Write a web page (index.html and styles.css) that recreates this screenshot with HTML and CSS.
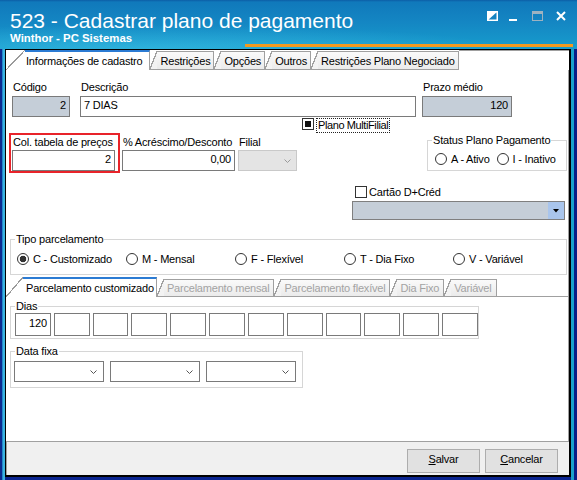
FILE: index.html
```html
<!DOCTYPE html>
<html lang="pt-BR">
<head>
<meta charset="utf-8">
<title>523 - Cadastrar plano de pagamento</title>
<link rel="stylesheet" href="styles.css">
</head>
<body>
<div class="window">
  <header class="titlebar">
    <div class="title-row">
      <h1 class="title">523 - Cadastrar plano de pagamento</h1>
      <div class="controls">
        <svg class="ctl ctl-dock" width="11" height="10" viewBox="0 0 11 10"><rect x="0.75" y="0.75" width="9.5" height="8.5" fill="none" stroke="#fff" stroke-width="1.5"/><polygon points="0,0 11,0 0,10" fill="#fff"/></svg>
        <svg class="ctl ctl-min" width="8" height="11" viewBox="0 0 8 11"><rect x="0" y="8" width="8" height="2" fill="#fff"/></svg>
        <svg class="ctl ctl-max" width="11" height="10" viewBox="0 0 11 10"><rect x="0.5" y="0.5" width="10" height="9" fill="none" stroke="#9db2c0"/><rect x="0" y="0" width="11" height="3" fill="#9db2c0"/></svg>
        <svg class="ctl ctl-close" width="10" height="10" viewBox="0 0 10 10"><path d="M1 1 L9 9 M9 1 L1 9" stroke="#fff" stroke-width="2"/></svg>
      </div>
    </div>
    <div class="subtitle">Winthor - PC Sistemas</div>
    <div class="accent"></div>
  </header>

  <div class="frame">
    <div class="panel">
      <nav class="tabs tabs-outer">
        <div class="tab active"><span>Informações de cadastro</span></div>
        <div class="tab"><span>Restrições</span></div>
        <div class="tab"><span>Opções</span></div>
        <div class="tab"><span>Outros</span></div>
        <div class="tab"><span>Restrições Plano Negociado</span></div>
      </nav>

      <section class="page">
        <div class="row row-main">
          <div class="field f-code">
            <span class="lbl">Código</span>
            <div class="input num ro">2</div>
          </div>
          <div class="field f-desc">
            <span class="lbl">Descrição</span>
            <div class="input">7 DIAS</div>
          </div>
          <div class="field f-prazo">
            <span class="lbl">Prazo médio</span>
            <div class="input num ro">120</div>
          </div>
        </div>

        <div class="row row-multi">
          <span class="check"><span class="mark"></span></span>
          <span class="focus-label">Plano MultiFilial</span>
        </div>

        <div class="row row-prices">
          <div class="redbox">
            <div class="field">
              <span class="lbl">Col. tabela de preços</span>
              <div class="input num f-col">2</div>
            </div>
          </div>
          <div class="field f-acr">
            <span class="lbl">% Acréscimo/Desconto</span>
            <div class="input num">0,00</div>
          </div>
          <div class="field f-filial">
            <span class="lbl">Filial</span>
            <div class="combo disabled">
              <svg class="chev" width="7" height="4" viewBox="0 0 7 4"><path d="M0.5 0.5 L3.5 3.5 L6.5 0.5" fill="none" stroke="#9a9a9a"/></svg>
            </div>
          </div>
          <fieldset class="group g-status">
            <legend>Status Plano Pagamento</legend>
            <div class="status-opts">
              <span class="radio"><span class="dot"></span>A - Ativo</span>
              <span class="radio"><span class="dot"></span>I - Inativo</span>
            </div>
          </fieldset>
        </div>

        <div class="card-col">
          <div class="card-check">
            <span class="check"></span>
            <span class="card-lbl">Cartão D+Créd</span>
          </div>
          <div class="combo-blue">
            <span class="drop">
              <svg width="6" height="4" viewBox="0 0 6 4"><polygon points="0,0 6,0 3,3.5" fill="#000"/></svg>
            </span>
          </div>
        </div>

        <fieldset class="group g-tipo">
          <legend>Tipo parcelamento</legend>
          <div class="tipo-opts">
            <span class="radio"><span class="dot on"></span>C - Customizado</span>
            <span class="radio"><span class="dot"></span>M - Mensal</span>
            <span class="radio"><span class="dot"></span>F - Flexível</span>
            <span class="radio"><span class="dot"></span>T - Dia Fixo</span>
            <span class="radio"><span class="dot"></span>V - Variável</span>
          </div>
        </fieldset>

        <nav class="tabs tabs-inner">
          <div class="tab active"><span>Parcelamento customizado</span></div>
          <div class="tab"><span>Parcelamento mensal</span></div>
          <div class="tab"><span>Parcelamento flexível</span></div>
          <div class="tab"><span>Dia Fixo</span></div>
          <div class="tab"><span>Variável</span></div>
        </nav>

        <fieldset class="group g-dias">
          <legend>Dias</legend>
          <div class="dias-grid">
            <div class="box">120</div>
            <div class="box"></div>
            <div class="box"></div>
            <div class="box"></div>
            <div class="box"></div>
            <div class="box"></div>
            <div class="box"></div>
            <div class="box"></div>
            <div class="box"></div>
            <div class="box"></div>
            <div class="box"></div>
            <div class="box"></div>
          </div>
        </fieldset>

        <fieldset class="group g-data">
          <legend>Data fixa</legend>
          <div class="data-row">
            <div class="combo"><svg class="chev" width="7" height="4" viewBox="0 0 7 4"><path d="M0.5 0.5 L3.5 3.5 L6.5 0.5" fill="none" stroke="#555"/></svg></div>
            <div class="combo"><svg class="chev" width="7" height="4" viewBox="0 0 7 4"><path d="M0.5 0.5 L3.5 3.5 L6.5 0.5" fill="none" stroke="#555"/></svg></div>
            <div class="combo"><svg class="chev" width="7" height="4" viewBox="0 0 7 4"><path d="M0.5 0.5 L3.5 3.5 L6.5 0.5" fill="none" stroke="#555"/></svg></div>
          </div>
        </fieldset>
      </section>

      <footer class="buttons">
        <button class="btn" type="button"><u>S</u>alvar</button>
        <button class="btn" type="button"><u>C</u>ancelar</button>
      </footer>
    </div>
  </div>
</div>
</body>
</html>
```

FILE: styles.css
```css
* { box-sizing: border-box; }

html, body { margin: 0; }

body {
  width: 577px;
  height: 480px;
  overflow: hidden;
  font-family: "Liberation Sans", Arial, sans-serif;
  font-size: 11px;
  letter-spacing: -0.2px;
  color: #000;
}

/* window frame: navy outer edge with a cyan inner bevel */
.window {
  width: 577px;
  height: 480px;
  display: flex;
  flex-direction: column;
  background:
    linear-gradient(90deg, #0b2a8f 0 2px, #2386cc 2px 3px, #3ab2e0 3px 5px, transparent 5px),
    linear-gradient(270deg, #0a1e86 0 3px, #1ba2cb 3px 6px, transparent 6px),
    #0b2590;
}

/* ---------- title bar ---------- */
.titlebar {
  flex: none;
  height: 49px;
  color: #fff;
  letter-spacing: 0;
  background:
    radial-gradient(90% 70% at 25% 100%, rgba(70, 200, 235, 0.5), rgba(70, 200, 235, 0) 70%),
    linear-gradient(180deg, #0c5ea6 0, #1079bb 2px, #1486c3 45%, #179dcd 100%);
}

.title-row {
  display: flex;
  justify-content: space-between;
  align-items: flex-start;
  height: 33px;
  padding: 8px 0 0 10px;
}

.title {
  margin: 0;
  font-size: 21px;
  font-weight: normal;
  line-height: 25px;
}

.controls {
  display: flex;
  align-items: flex-start;
  margin: 3px 11px 0 0;
}

.ctl { display: block; flex: none; }
.ctl-min { margin-left: 11px; }
.ctl-max { margin-left: 15px; }
.ctl-close { margin-left: 13px; }

.subtitle {
  padding-left: 10px;
  font-size: 11.4px;
  font-weight: bold;
  line-height: 11px;
}

.accent {
  height: 3px;
  margin: 0 4px 0 245px;
  background: #f39a1f;
}

/* ---------- client area ---------- */
.frame {
  flex: 1;
  display: flex;
  min-height: 0;
  padding: 0 6px 3px 5px;
}

.panel {
  flex: 1;
  min-width: 0;
  display: flex;
  flex-direction: column;
  background: #fff;
  border: 1px solid #000;
  border-right-width: 2px;
  border-bottom-width: 2px;
}

/* ---------- slanted tabs ---------- */
.tabs {
  flex: none;
  display: flex;
  align-items: flex-end;
  height: 20px;
}

.tab {
  display: flex;
  height: 19px;
}

.tab::before {
  content: "";
  flex: none;
  width: 7px;
  border-bottom: 1px solid #a0a0a0;
  background: linear-gradient(to bottom right,
    transparent calc(50% - 0.6px), #a0a0a0 calc(50% - 0.6px),
    #a0a0a0 calc(50% + 0.6px), #f3f3f3 calc(50% + 0.6px));
}

.tab span {
  display: block;
  white-space: nowrap;
  line-height: 15px;
  padding: 2px 3px 0 3px;
  border: 1px solid #a0a0a0;
  border-left: 0;
  background: linear-gradient(#fafafa, #ebebeb);
}

.tab.active { height: 20px; }

.tab.active::before {
  width: 19px;
  border-bottom: 0;
  background: linear-gradient(to bottom right,
    transparent calc(50% - 0.6px), #9a9a9a calc(50% - 0.6px),
    #9a9a9a calc(50% + 0.6px), #fff calc(50% + 0.6px));
}

.tab.active span {
  border-top: 2px solid #2b7bd3;
  border-bottom: 0;
  background: #fff;
  padding: 2px 7px 1px 1px;
}

.tabs-outer::after {
  content: "";
  flex: 1;
  align-self: stretch;
  border-top: 1px solid #a0a0a0;
}

.tabs-inner {
  align-self: stretch;
  margin: 2px 0 0 -4px;
}

.tabs-inner::after {
  content: "";
  flex: 1;
  align-self: stretch;
  border-bottom: 1px solid #a0a0a0;
}

.tabs-inner .tab { height: 18px; }
.tabs-inner .tab span { padding: 1px 4px 0 3px; color: #a3a3a3; }
.tabs-inner .tab.active { height: 20px; }
.tabs-inner .tab.active::before { width: 17px; }
.tabs-inner .tab.active span { color: #000; padding: 2px 2px 1px 3px; }

/* ---------- form page ---------- */
.page {
  flex: 1;
  display: flex;
  flex-direction: column;
  align-items: flex-start;
  padding: 10px 0 0 4px;
  border-right: 1px solid #a0a0a0;
}

.row {
  display: flex;
  align-items: flex-start;
}

.field {
  display: flex;
  flex-direction: column;
}

.lbl {
  height: 14px;
  line-height: 14px;
  padding-left: 1px;
  margin-bottom: 2px;
  white-space: nowrap;
}

.input {
  height: 21px;
  line-height: 17px;
  padding: 0 3px 2px;
  border: 1px solid #7a7a7a;
  background: #fff;
  white-space: nowrap;
  overflow: hidden;
}

.input.num { text-align: right; }
.input.ro { background: #c5ced8; }

.f-code { margin-left: 2px; width: 58px; }
.f-desc { margin-left: 10px; width: 336px; }
.f-prazo { margin-left: 6px; width: 90px; }

/* multi-branch checkbox row */
.row-multi {
  height: 16px;
  margin-left: 292px;
}

.check {
  flex: none;
  display: block;
  width: 12px;
  height: 12px;
  padding: 2px;
  border: 1px solid #333;
  background: #fff;
}

.row-multi .check { margin-top: 1px; }

.mark {
  display: block;
  width: 6px;
  height: 6px;
  background: #111;
}

.focus-label {
  margin: 1px 0 0 2px;
  height: 15px;
  line-height: 12px;
  padding: 0 1px 1px;
  border: 1px dotted #222;
  white-space: nowrap;
  letter-spacing: -0.4px;
}

/* price table row */
.row-prices { height: 40px; }
.row-prices .lbl { margin-bottom: 1px; }

.redbox {
  margin-left: -1px;
  padding: 0 3px 0 1px;
  border: 2px solid #e8232a;
}

.f-col { width: 103px; }

.f-acr { margin: 2px 0 0 2px; width: 113px; }
.f-filial { margin: 2px 0 0 3px; width: 59px; }

.combo {
  height: 21px;
  display: flex;
  align-items: center;
  justify-content: flex-end;
  padding-right: 6px;
  border: 1px solid #7a7a7a;
  background: #fff;
}

.combo.disabled {
  padding-right: 5px;
  border-color: #c9c9c9;
  background: #e4e4e4;
}

.chev { display: block; }

/* group boxes */
.group {
  margin: 0;
  padding: 0;
  min-width: 0;
  border: 1px solid #d6d6d6;
}

.group > legend {
  margin-left: 4px;
  padding: 0 1px;
  line-height: 12px;
  white-space: nowrap;
}

.g-status {
  width: 140px;
  margin: 1px 0 0 130px;
}

.status-opts {
  display: flex;
  gap: 7px;
  padding: 7px 0 4px 7px;
}

.radio {
  display: flex;
  align-items: flex-start;
  height: 13px;
  line-height: 12px;
  white-space: nowrap;
}

.dot {
  flex: none;
  width: 12px;
  height: 12px;
  margin-right: 4px;
  border: 1px solid #333;
  border-radius: 50%;
  background: #fff;
}

.dot.on {
  background: radial-gradient(circle, #333 0 3px, #fff 3.6px);
}

/* card toggle and selector */
.card-col {
  width: 213px;
  margin: 13px 0 0 342px;
  display: flex;
  flex-direction: column;
}

.card-check {
  display: flex;
  height: 13px;
  line-height: 13px;
  padding-left: 3px;
}

.card-lbl { margin-left: 2px; white-space: nowrap; }

.combo-blue {
  height: 19px;
  margin-top: 2px;
  display: flex;
  justify-content: flex-end;
  border: 1px solid #7f7f7f;
  background: #c5ced8;
}

.combo-blue .drop {
  width: 16px;
  display: flex;
  align-items: center;
  justify-content: center;
  background: #a9c5ec;
}

.combo-blue svg { display: block; }

/* installment type */
.g-tipo {
  width: 557px;
  margin-top: 13px;
}

.tipo-opts {
  display: grid;
  grid-template-columns: repeat(5, 109px);
  padding: 8px 0 8px 6px;
}

/* day boxes */
.g-dias {
  width: 469px;
  margin-top: 3px;
}

.dias-grid {
  display: grid;
  grid-template-columns: repeat(12, 1fr);
  column-gap: 3px;
  padding: 1px 0 2px 4px;
}

.box {
  height: 23px;
  line-height: 19px;
  padding: 0 3px 2px 0;
  text-align: right;
  border: 1px solid #7a7a7a;
}

/* fixed dates */
.g-data {
  width: 293px;
  margin-top: 6px;
}

.data-row {
  display: flex;
  gap: 6px;
  padding: 4px 6px 5px 3px;
}

.data-row .combo { width: 90px; }

/* ---------- footer buttons ---------- */
.buttons {
  flex: none;
  height: 34px;
  display: flex;
  justify-content: flex-end;
  align-items: flex-start;
  gap: 5px;
  padding: 7px 11px 0 0;
  border-top: 1px solid #a0a0a0;
  border-left: 1px solid #a0a0a0;
  background: #f0f0f0;
}

.btn {
  width: 73px;
  height: 24px;
  margin: 0;
  padding: 0 0 3px;
  font: inherit;
  letter-spacing: inherit;
  line-height: 19px;
  color: #000;
  text-align: center;
  border: 1px solid #adadad;
  border-radius: 0;
  background: #e1e1e1;
}
```
